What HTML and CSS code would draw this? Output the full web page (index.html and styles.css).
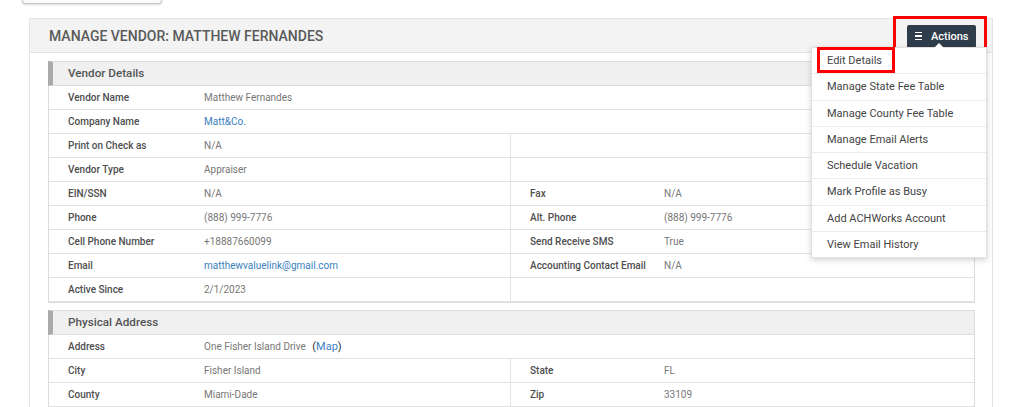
FILE: index.html
```html
<!DOCTYPE html>
<html>
<head>
<meta charset="utf-8">
<link rel="stylesheet" href="styles.css">
</head>
<body>
<div class="topbar"><div class="oldbtn"></div></div>
<div class="panel">
  <div class="panel-head">
    <h1 class="title">MANAGE VENDOR: MATTHEW FERNANDES</h1>
    <div class="actions-wrap">
      <button class="actions-btn"><span class="bars"><i></i><i></i><i></i></span>Actions</button>
      <div class="hl hl-actions"></div>
    </div>
  </div>
  <ul class="menu">
    <li class="first">Edit Details</li>
    <li>Manage State Fee Table</li>
    <li>Manage County Fee Table</li>
    <li>Manage Email Alerts</li>
    <li>Schedule Vacation</li>
    <li>Mark Profile as Busy</li>
    <li>Add ACHWorks Account</li>
    <li>View Email History</li>
  </ul>
  <div class="hl hl-edit"></div>
  <div class="panel-body">
    <section class="sec">
      <div class="sec-head">Vendor Details</div>
      <div class="row full"><div class="lab">Vendor Name</div><div class="val">Matthew Fernandes</div></div>
      <div class="row full"><div class="lab">Company Name</div><div class="val link">Matt&amp;Co.</div></div>
      <div class="row"><div class="lab">Print on Check as</div><div class="val">N/A</div><div class="lab div"></div><div class="val"></div></div>
      <div class="row"><div class="lab">Vendor Type</div><div class="val">Appraiser</div><div class="lab div"></div><div class="val"></div></div>
      <div class="row"><div class="lab">EIN/SSN</div><div class="val">N/A</div><div class="lab div">Fax</div><div class="val">N/A</div></div>
      <div class="row"><div class="lab">Phone</div><div class="val">(888) 999-7776</div><div class="lab div">Alt. Phone</div><div class="val">(888) 999-7776</div></div>
      <div class="row"><div class="lab">Cell Phone Number</div><div class="val">+18887660099</div><div class="lab div">Send Receive SMS</div><div class="val">True</div></div>
      <div class="row"><div class="lab">Email</div><div class="val link">matthewvaluelink@gmail.com</div><div class="lab div">Accounting Contact Email</div><div class="val">N/A</div></div>
      <div class="row"><div class="lab">Active Since</div><div class="val">2/1/2023</div><div class="lab div"></div><div class="val"></div></div>
    </section>
    <section class="sec last">
      <div class="sec-head">Physical Address</div>
      <div class="row full"><div class="lab">Address</div><div class="val">One Fisher Island Drive <span class="paren">(<span class="link">Map</span>)</span></div></div>
      <div class="row"><div class="lab">City</div><div class="val">Fisher Island</div><div class="lab div">State</div><div class="val">FL</div></div>
      <div class="row"><div class="lab">County</div><div class="val">Miami-Dade</div><div class="lab div">Zip</div><div class="val">33109</div></div>
    </section>
  </div>
</div>
</body>
</html>
```

FILE: styles.css
```css
html, body {
  margin: 0;
  padding: 0;
  background: #fff;
  font-family: Roboto, "Liberation Sans", Arial, sans-serif;
  overflow: hidden;
  height: 407px;
}
.topbar {
  display: flow-root;
  height: 18px;
  padding-left: 22px;
}
.oldbtn {
  width: 138px;
  height: 20px;
  margin-top: -18px;
  border: 1px solid #c8c8c8;
  border-radius: 3px;
  background: #fafafa;
  box-shadow: 0 1px 2px rgba(0,0,0,0.15);
}
.panel {
  position: relative;
  margin-left: 29px;
  width: 962px;
  border: 1px solid #e3e3e3;
  border-bottom: none;
  background: #fff;
}
.panel-head {
  height: 33px;
  background: #f3f3f3;
  border-bottom: 1px solid #e3e3e3;
  display: flex;
  align-items: center;
  justify-content: space-between;
  padding: 0 16px 0 19px;
}
.title {
  margin: 0;
  font-size: 14px;
  font-weight: 500;
  color: #5a5a5a;
}
.actions-wrap {
  position: relative;
  margin-top: 1px;
}
.actions-btn {
  display: flex;
  align-items: center;
  height: 23px;
  width: 69px;
  padding: 0 0 0 8px;
  border: none;
  border-radius: 2px;
  background: #2f3c4a;
  color: #fff;
  font-family: Roboto, "Liberation Sans", Arial, sans-serif;
  font-size: 11px;
  font-weight: 500;
}
.bars {
  display: flex;
  flex-direction: column;
  gap: 2px;
  width: 7px;
  margin-right: 9px;
}
.bars i {
  display: block;
  height: 1.5px;
  background: #fff;
}
.hl {
  position: absolute;
  border: 3px solid #f00;
  pointer-events: none;
}
.hl-actions {
  left: -14px;
  top: -9px;
  width: 88px;
  height: 31px;
}
.menu {
  position: absolute;
  left: 781px;
  top: 28px;
  width: 174px;
  margin: 0;
  padding: 0;
  list-style: none;
  background: #fff;
  border: 1px solid #e0e0e0;
  box-shadow: 0 2px 6px rgba(0,0,0,0.18);
  z-index: 5;
}
.menu::before {
  content: "";
  position: absolute;
  left: 122px;
  top: -5px;
  border-left: 5px solid transparent;
  border-right: 5px solid transparent;
  border-bottom: 5px solid #fff;
}
.menu li {
  height: 25.3px;
  line-height: 25.3px;
  padding-left: 15px;
  border-top: 1px solid #ececec;
  font-size: 11px;
  color: #444;
  white-space: nowrap;
}
.menu li.first {
  border-top: none;
}
.hl-edit {
  left: 787px;
  top: 28px;
  width: 72px;
  height: 20px;
  z-index: 6;
}
.panel-body {
  padding: 8px 18px 0 18px;
}
.sec {
  width: 925px;
  border: 1px solid #dcdcdc;
  border-top: none;
  margin-bottom: 7px;
}
.sec.last {
  margin-bottom: 0;
}
.sec-head {
  height: 23px;
  line-height: 23px;
  background: #f0f0f0;
  border-left: 5px solid #aaa;
  border-top: 1px solid #dcdcdc;
  border-bottom: 1px solid #dcdcdc;
  margin-left: -1px;
  padding-left: 15px;
  font-size: 11.7px;
  font-weight: 500;
  color: #555;
}
.row {
  display: grid;
  grid-template-columns: 155px 306px 154px 1fr;
  height: 23px;
  border-bottom: 1px solid #e2e2e2;
  font-size: 10px;
}
.row.full {
  grid-template-columns: 155px 1fr;
}
.lab, .val {
  line-height: 23px;
  white-space: nowrap;
  overflow: hidden;
}
.lab {
  padding-left: 19px;
  color: #4e4e4e;
  font-weight: 500;
}
.lab.div {
  border-left: 1px solid #e2e2e2;
}
.val {
  color: #777;
}
.link {
  color: #3a7fc0;
}
.paren {
  color: #333;
  font-size: 11px;
  margin-left: 4px;
}
```
